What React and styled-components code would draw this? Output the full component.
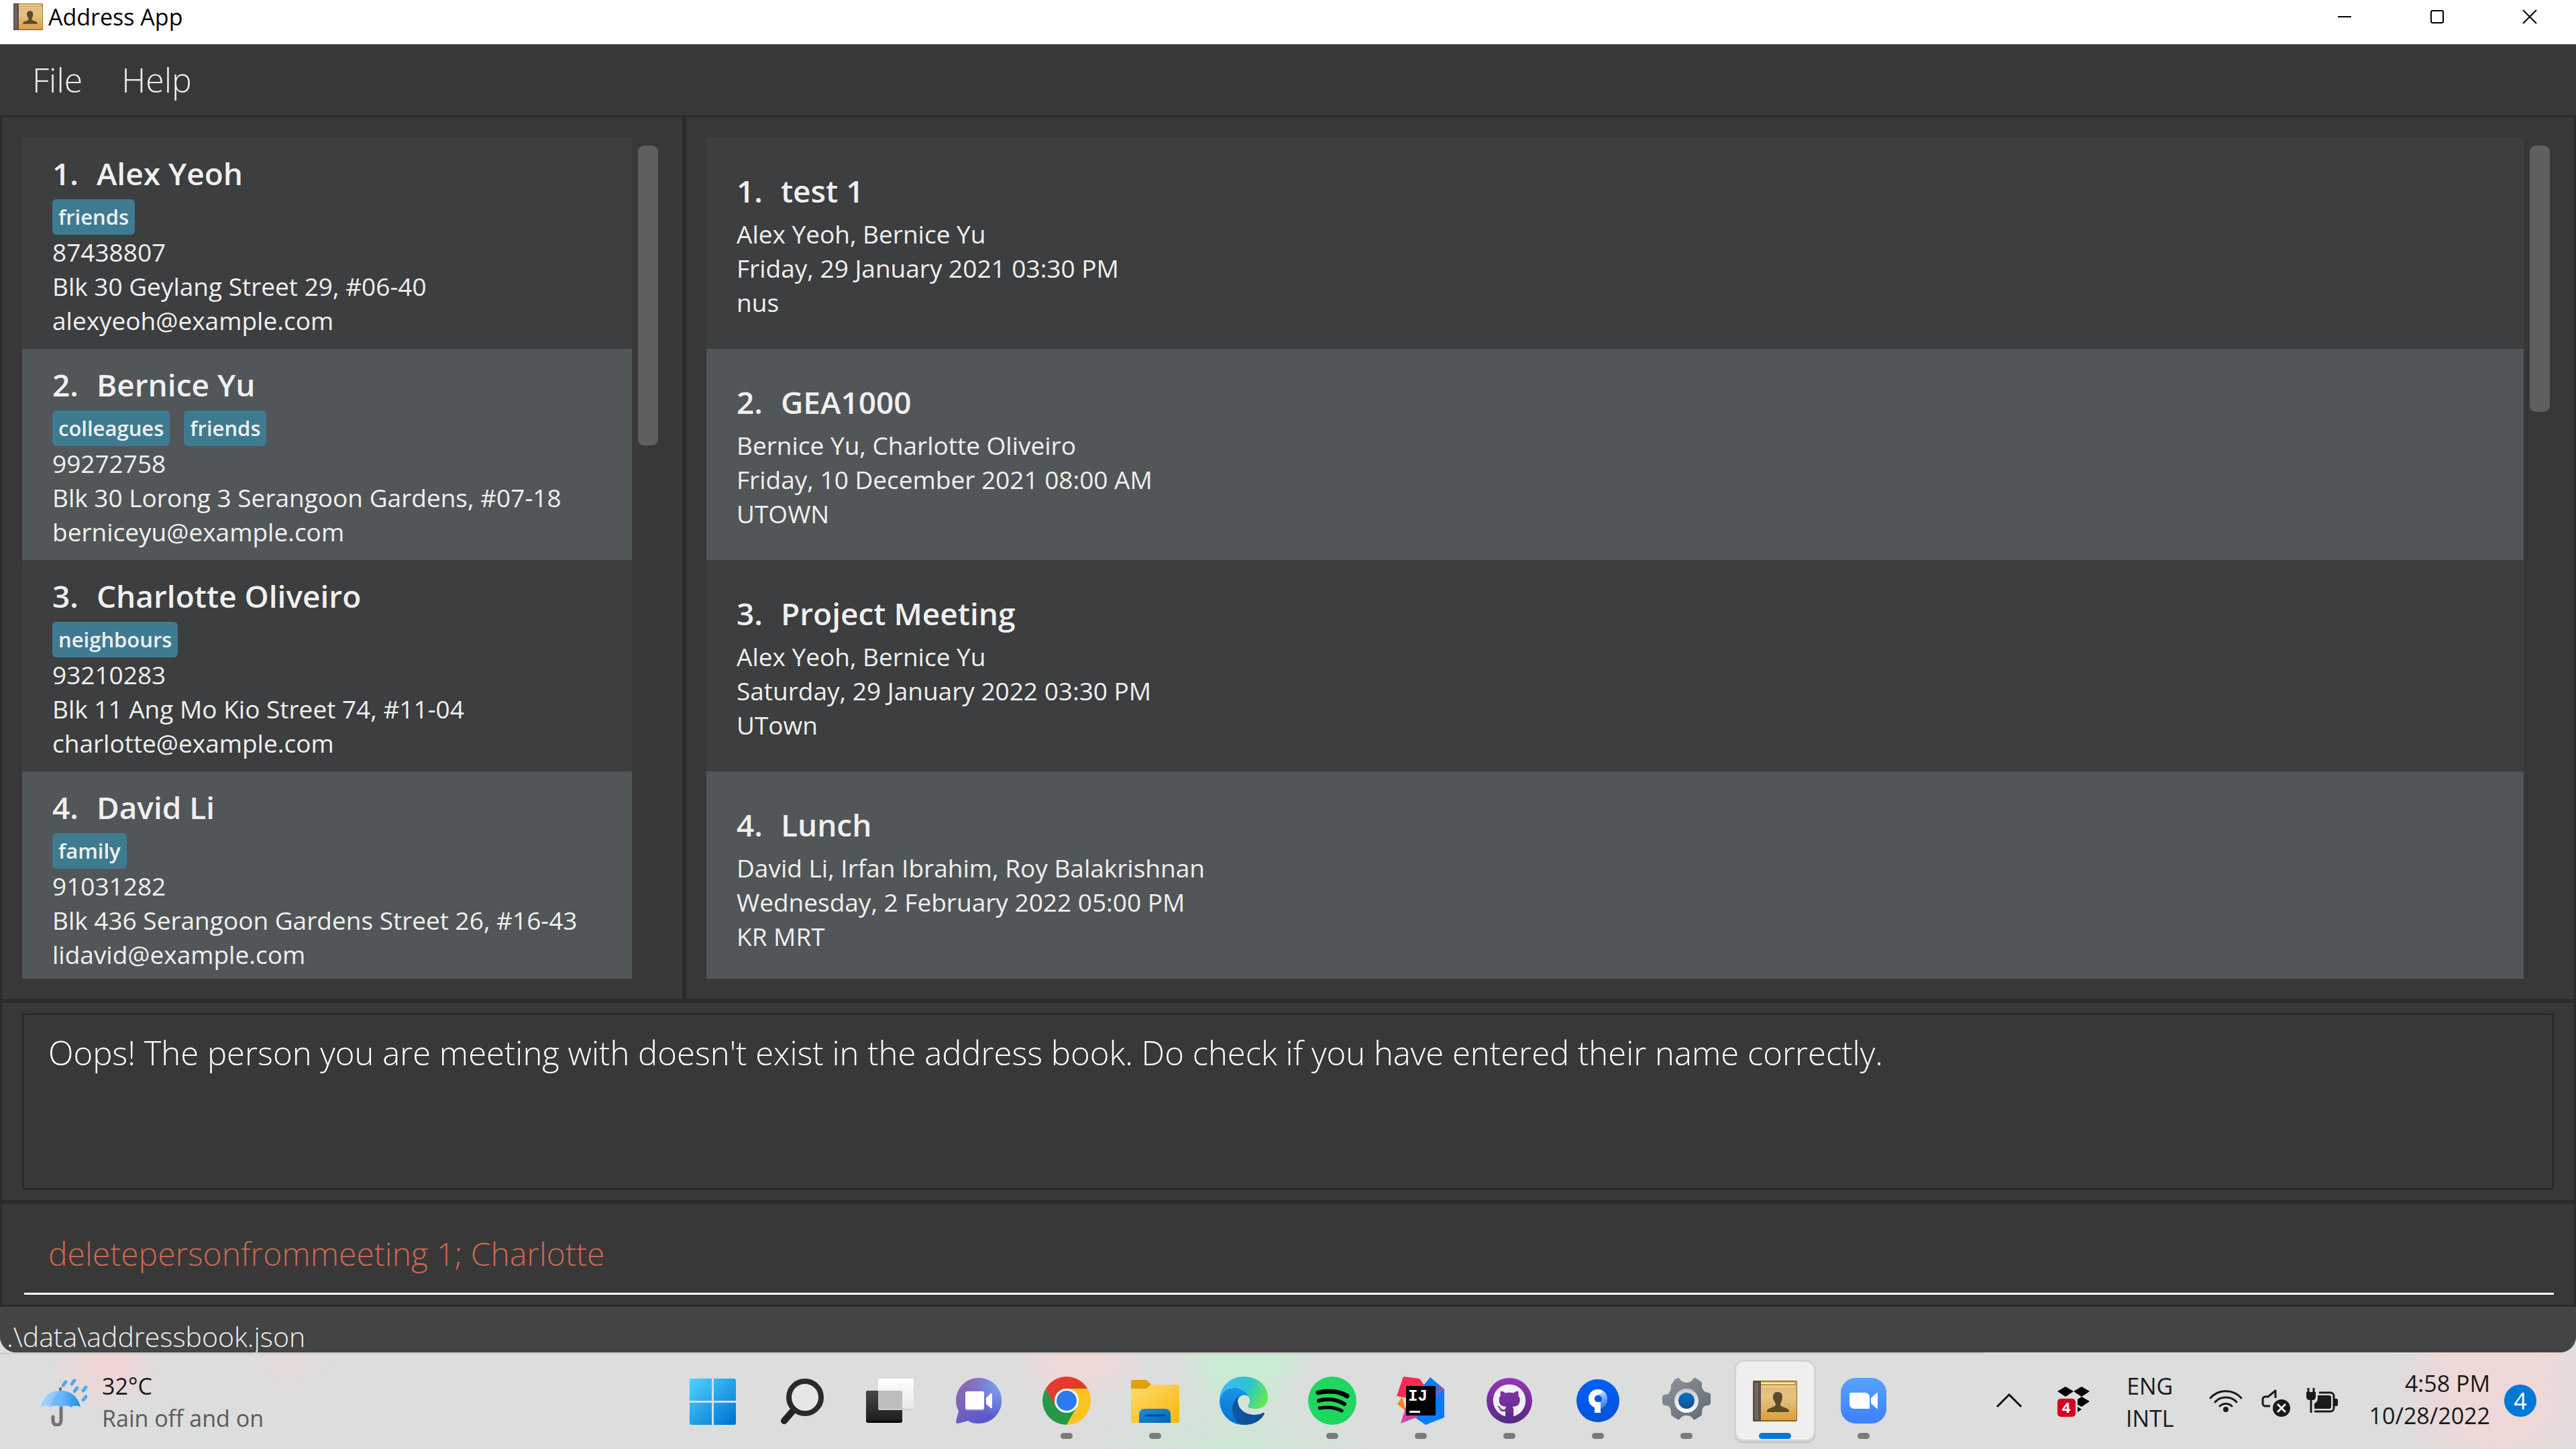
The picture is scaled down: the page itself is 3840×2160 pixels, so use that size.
import React from "react";
import styled, { createGlobalStyle, css } from "styled-components";
import { FaGithub } from "react-icons/fa";

const color = {
  base: "#383838",
  border: "#2b2b2b",
  rowEven: "#3c3e3f",
  rowOdd: "#515658",
  thumb: "#5f5f5f",
  tag: "#3e7b91",
  text: "#f0f0f0",
  error: "#d06651",
  status: "#444444",
  taskbar: "#dcdddd",
  ink: "#1a1a1a",
  accent: "#0078d7",
};

const GlobalStyle = createGlobalStyle`
  *, *::before, *::after { box-sizing: border-box; }
  html, body, #root { height: 100%; }
  body {
    margin: 0;
    overflow: hidden;
    background: ${color.taskbar};
    font-family: "Open Sans", "Noto Sans", sans-serif;
  }
  button { border: 0; padding: 0; background: none; font: inherit; color: inherit; }
  svg { display: block; }
`;

const Desktop = styled.div`
  display: flex;
  flex-direction: column;
  height: 100vh;
`;

const Window = styled.div`
  display: flex;
  flex-direction: column;
  flex: 1;
  min-height: 0;
  overflow: hidden;
  border-radius: 0 0 24px 24px;
  background: ${color.base};
`;

/* Title bar */

const TitleBar = styled.header`
  display: flex;
  align-items: center;
  height: 66px;
  padding: 0 0 16px 20px;
  background: #fff;
`;

const WindowTitle = styled.h1`
  flex: 1;
  margin: 0;
  padding-left: 8px;
  font-size: 34px;
  line-height: 48px;
  font-weight: 400;
  color: #000;
`;

const WindowButton = styled.button`
  display: grid;
  place-items: center;
  width: 138px;
  height: 48px;
`;

/* Menu */

const MenuBar = styled.nav`
  display: flex;
  align-items: center;
  height: 106px;
  padding-left: 19px;
`;

const MenuButton = styled.button`
  padding: 0 29px;
  font-size: 50px;
  line-height: 68px;
  font-weight: 300;
  color: ${color.text};
`;

/* Panels */

const Panel = styled.section`
  border: 3px solid ${color.border};
  background: ${color.base};
`;

const Panels = styled.main`
  display: grid;
  grid-template-columns: minmax(0, 17fr) minmax(0, 47fr);
  grid-template-rows: minmax(0, 1fr);
  flex: 1;
  min-height: 0;
`;

const ListPanel = styled(Panel)`
  display: flex;
  gap: 9px;
  padding: 30px 36px 30px 30px;
`;

const List = styled.ul`
  flex: 1;
  min-width: 0;
  margin: 0;
  padding: 0;
  overflow: hidden;
  list-style: none;
`;

const Track = styled.div`
  width: 30px;
  padding-top: 12px;
`;

const Thumb = styled.div`
  height: ${(p) => p.$size};
  border-radius: 9px;
  background: ${color.thumb};
`;

const Card = styled.li`
  padding: ${(p) => (p.$roomy ? "48px 45px 44px" : "22px 45px 17px")};
  color: ${color.text};
  background: ${color.rowEven};
  &:nth-child(even) { background: ${color.rowOdd}; }
`;

const CardTitle = styled.h2`
  display: flex;
  gap: 27px;
  margin: 0 0 8px;
  font-size: 46px;
  line-height: 62px;
  font-weight: 600;
`;

const Tags = styled.div`
  display: flex;
  gap: 21px;
`;

const Tag = styled.span`
  padding: 0 9px;
  border-radius: 6px;
  font-size: 31px;
  line-height: 53px;
  font-weight: 600;
  background: ${color.tag};
`;

const Detail = styled.p`
  margin: 0;
  font-size: 37px;
  line-height: 51px;
  white-space: nowrap;
`;

/* Result, command and status */

const ResultPanel = styled(Panel)`
  display: flex;
  height: 300px;
  padding: 15px 30px;
`;

const ResultText = styled.textarea`
  flex: 1;
  padding: 24px 36px;
  border: 3px solid ${color.border};
  outline: 0;
  resize: none;
  background: transparent;
  font-family: inherit;
  font-size: 49px;
  line-height: 64px;
  font-weight: 300;
  color: #fff;
`;

const CommandPanel = styled(Panel)`
  display: flex;
  height: 156px;
  padding: 15px 30px 15px 33px;
`;

const CommandInput = styled.input`
  flex: 1;
  padding: 0 36px;
  border: 0;
  border-bottom: 3px solid #fff;
  outline: 0;
  background: transparent;
  font-family: inherit;
  font-size: 48px;
  font-weight: 300;
  color: ${color.error};
`;

const StatusBar = styled.footer`
  height: 68px;
  padding: 20px 10px 0;
  background: ${color.status};
  font-size: 41px;
  line-height: 48px;
  font-weight: 300;
  color: ${color.text};
`;

/* Taskbar */

const Taskbar = styled.div`
  display: grid;
  grid-template-columns: minmax(0, 1fr) auto minmax(0, 1fr);
  align-items: center;
  height: 144px;
  background:
    linear-gradient(#cfcfcf, #cfcfcf) top left / 77% 3px no-repeat,
    radial-gradient(ellipse 90px 80px at 158px 12px, #f0d5d5 20%, transparent),
    radial-gradient(ellipse 70px 50px at 430px 10px, #e6d9d9, transparent),
    radial-gradient(ellipse 110px 90px at 1610px 0, #f0d8d8 30%, transparent),
    radial-gradient(ellipse 110px 90px at 1855px 0, #c8edd2 40%, transparent),
    radial-gradient(ellipse 200px 120px at 1840px 144px, #cfe5d6 20%, transparent),
    radial-gradient(ellipse 160px 160px at 3720px 50px, #efd8d8 40%, transparent),
    ${color.taskbar};
`;

const Weather = styled.button`
  display: flex;
  align-items: center;
  justify-self: start;
  gap: 20px;
  padding: 4px 0 0 60px;
  text-align: left;
`;

const TwoLines = styled.span`
  display: flex;
  flex-direction: column;
  font-size: 34px;
  line-height: 48px;
  color: ${color.ink};
`;

const Muted = styled.span`
  color: #5a5a5a;
`;

const Apps = styled.div`
  display: flex;
  gap: 16px;
`;

const AppButton = styled.button`
  position: relative;
  display: grid;
  place-items: center;
  width: 116px;
  height: 116px;
  border-radius: 12px;
  ${(p) =>
    p.$state === "active" &&
    css`
      background: #efefef;
      box-shadow: 0 0 0 3px #d3d3d3, 0 3px 0 3px #c9c9c9;
    `}
  ${(p) =>
    p.$state &&
    css`
      &::after {
        content: "";
        position: absolute;
        bottom: 1px;
        left: 50%;
        width: ${p.$state === "active" ? 48 : 18}px;
        height: 9px;
        border-radius: 5px;
        transform: translateX(-50%);
        background: ${p.$state === "active" ? color.accent : "#7b7b7b"};
      }
    `}
`;

const Tray = styled.div`
  display: flex;
  align-items: center;
  justify-self: end;
  padding-right: 59px;
`;

const TrayButton = styled.button`
  display: flex;
  align-items: center;
  margin-right: ${(p) => p.$after}px;
  padding-top: ${(p) => p.$drop || 0}px;
`;

const Clock = styled(TwoLines)`
  padding-bottom: 4px;
  text-align: right;
`;

const Badge = styled.button`
  width: 48px;
  height: 48px;
  border-radius: 50%;
  background: ${color.accent};
  font-size: 34px;
  line-height: 48px;
  color: #fff;
`;

/* Icons */

const AddressBook = ({ id, width = 66, height = 61 }) => (
  <svg width={width} height={height} viewBox="0 0 66 61" preserveAspectRatio="none" aria-hidden="true">
    <defs>
      <linearGradient id={id} x1="0" y1="0" x2="0" y2="1">
        <stop offset="0" stopColor="#dfb878" />
        <stop offset=".4" stopColor="#e6c285" />
        <stop offset="1" stopColor="#d9a03c" />
      </linearGradient>
    </defs>
    <rect width="66" height="61" rx="2" fill="#8a6420" />
    <rect x="12" y="1" width="53" height="58" fill={`url(#${id})`} />
    <rect x="12" y="1" width="52" height="6" fill="#c99a48" />
    <path d="M7 4H62" stroke="#fff3d8" strokeWidth="2" />
    <path d="M13 9H63" stroke="#f4ddb0" strokeWidth="1" />
    <rect width="12" height="61" rx="2" fill="#5d4f4a" />
    <rect x="3" y="3" width="5" height="55" fill="#75665f" />
    <path d="M37 17c5 0 7 3.500 7 8 0 4-2 7-3 10 0 4 4 4 8 6 4 1 5 3 5 6H21c0-3 1-5 5-6 4-2 8-2 8-6-1-3-4-6-4-10 0-4.500 2-8 7-8z" fill="#5d4a2c" />
  </svg>
);

const Icon = ({ children }) => (
  <svg width="72" height="72" viewBox="0 0 72 72" aria-hidden="true">{children}</svg>
);

const Grad = ({ id, from, to, x2 = 0, y2 = 1 }) => (
  <linearGradient id={id} x1="0" y1="0" x2={x2} y2={y2}>
    <stop offset="0" stopColor={from} />
    <stop offset="1" stopColor={to} />
  </linearGradient>
);

const Umbrella = () => (
  <Icon>
    <defs>
      <Grad id="canopy" from="#a4d2ff" to="#6bb4fb" x2={1} y2={0} />
      <Grad id="canopyDark" from="#6fb9fb" to="#1b8bea" x2={1} y2={0} />
    </defs>
    <path d="M30 16v6" stroke="#6e6e6e" strokeWidth="4" strokeLinecap="round" />
    <path d="M31 42v21c0 10-12 9-12 1v-6" fill="none" stroke="#77716f" strokeWidth="5" strokeLinecap="round" />
    <path d="M1 44C3 29 14 19 30 19s27 10 30 25q-4-4-7-2-4-2-7 2-4-4-8-2-4-2-8 2-4-4-8-2-4-2-8 2-4-4-7-2-4-2-6 2z" fill="url(#canopy)" />
    <path d="M30 19c16 0 27 10 30 25q-4-4-7-2-4-2-7 2-4-4-8-2-4-2-8 2z" fill="url(#canopyDark)" />
    <path d="M30 19c-8 5-13 14-14 25q3-4 7-2 4-2 7 2z" fill="#54a8f5" opacity=".5" />
    <path d="M38 6l-4 5M51 4l-4 5M55 15l-4 5M68 14l-4 5M68 28l-4 5" stroke="#4ea8f8" strokeWidth="5" strokeLinecap="round" />
  </Icon>
);

const WindowsLogo = () => (
  <Icon>
    <defs>
      <linearGradient id="win" gradientUnits="userSpaceOnUse" x1="2" y1="3" x2="66" y2="72">
        <stop offset="0" stopColor="#4fd4ff" />
        <stop offset="1" stopColor="#0074d3" />
      </linearGradient>
    </defs>
    <path fill="url(#win)" d="M5 3h30v33H2V6a3 3 0 013-3zM38 3h30a3 3 0 013 3v30H38zM2 39h33v33H5a3 3 0 01-3-3zM38 39h33v30a3 3 0 01-3 3H38z" />
  </Icon>
);

const Search = () => (
  <Icon>
    <path d="M24 51L11 66" stroke="#222" strokeWidth="10" strokeLinecap="round" />
    <circle cx="42" cy="31" r="24" fill="#e6e6e6" stroke="#2b2a29" strokeWidth="8" />
  </Icon>
);

const TaskView = () => (
  <Icon>
    <defs>
      <Grad id="tvd" from="#474747" to="#1e1e1e" />
      <Grad id="tvl" from="#ffffff" to="#e6e6e6" />
    </defs>
    <rect x="1" y="21" width="54" height="48" rx="3" fill="#0a0a0a" />
    <rect x="1" y="21" width="54" height="45" rx="3" fill="url(#tvd)" />
    <rect x="19" y="3" width="53" height="47" rx="3" fill="url(#tvl)" />
    <path d="M19 21h33a3 3 0 013 3v24H19z" fill="#bdbdbd" />
    <path d="M20 49h51" stroke="#cfcfcf" strokeWidth="2" />
  </Icon>
);

const Chat = () => (
  <Icon>
    <defs>
      <linearGradient id="chat" x1="0" y1=".2" x2=".6" y2="1">
        <stop offset="0" stopColor="#9169b3" />
        <stop offset="1" stopColor="#5558c8" />
      </linearGradient>
      <radialGradient id="chat2" cx=".95" cy=".2" r=".7">
        <stop offset="0" stopColor="#7ba0f5" />
        <stop offset="1" stopColor="#7ba0f5" stopOpacity="0" />
      </radialGradient>
    </defs>
    {["url(#chat)", "url(#chat2)"].map((fill) => (
      <path key={fill} fill={fill} d="M37 2c19 0 34 15 34 34S56 70 37 70c-6 0-11-1-16-4L6 70c-2 0-3-1-3-3l4-16C4 46 3 41 3 36 3 17 18 2 37 2z" />
    ))}
    <rect x="17" y="24" width="28" height="27" rx="3" fill="#8b8de0" />
    <rect x="17" y="22" width="28" height="27" rx="3" fill="#fff" />
    <path d="M48 32l7-7q2-1 2 1v20q0 2-2 1l-7-6z" fill="#fff" />
  </Icon>
);

const Chrome = () => (
  <Icon>
    <defs><clipPath id="chr"><circle cx="36" cy="36" r="36" /></clipPath></defs>
    <g clipPath="url(#chr)">
      <path d="M0 0h72v18H36L20 45 4.800 18z" fill="#e33b2e" />
      <path d="M4.800 18L20.400 45 51.600 45 36 72H0V10z" fill="#279847" />
      <path d="M67.200 18H36L51.600 45 36 72H72V18z" fill="#fcc31e" />
    </g>
    <circle cx="36" cy="36" r="18" fill="#fff" />
    <circle cx="36" cy="36" r="15" fill="#2b7bee" />
  </Icon>
);

const Explorer = () => (
  <Icon>
    <defs>
      <Grad id="fold" from="#ffdc6e" to="#f7b50c" x2={1} />
      <Grad id="foldb" from="#1590df" to="#0463b8" x2={1} />
    </defs>
    <path d="M3 5h18c3 0 4 2 6 4l4 4v7H0V8a3 3 0 013-3z" fill="#e0a106" />
    <path d="M0 18h20c4 0 6-2 9-6h40a3 3 0 013 3v51a3 3 0 01-3 3H3a3 3 0 01-3-3z" fill="url(#fold)" />
    <path d="M12 69V56a8 8 0 018-8h31a8 8 0 018 8v13z" fill="url(#foldb)" />
    <path d="M22 58h28" stroke="#0b4a8c" strokeWidth="3" strokeLinecap="round" />
  </Icon>
);

const Edge = () => (
  <Icon>
    <defs>
      <Grad id="edb" from="#1795e6" to="#0072cf" />
      <Grad id="edd" from="#0c59a4" to="#134a8a" x2={1} y2={0} />
      <linearGradient id="edt" x1="0" y1=".3" x2="1" y2=".6">
        <stop offset="0" stopColor="#3db9fb" />
        <stop offset=".55" stopColor="#2fc3cf" />
        <stop offset="1" stopColor="#66e84f" />
      </linearGradient>
    </defs>
    <path fill="url(#edb)" d="M0 36C1 24 10 17 22 17c14 0 22 11 22 14-4-6-15-4-17 5 0 12 11 21 25 21 6 0 10-1 13-3q3 0 1 3C60 67 49 72 36 72 16 72 0 56 0 36z" />
    <path fill="url(#edd)" d="M30 28c-8 6-11 14-11 20 0 12 7 23 17 24 13 0 24-5 30-15q2-3-1-3c-3 2-7 3-13 3-14 0-25-9-25-21 0-4 1-6 3-8z" />
    <path fill="url(#edt)" d="M0 36C0 15 16 0 36 0c21 0 36 14 36 31 0 11-8 17-18 17-7 0-12-2-12-4s3-3 3-8c0-9-9-19-23-19C10 17 1 24 0 36z" />
  </Icon>
);

const Spotify = () => (
  <Icon>
    <circle cx="36" cy="36" r="36" fill="#1ed760" />
    <g fill="none" stroke="#000" strokeLinecap="round">
      <path d="M15 24c14-4 32-2 43 5" strokeWidth="7" />
      <path d="M16 36c13-4 27-2 38 5" strokeWidth="6" />
      <path d="M17 47c12-2 24-1 33 4" strokeWidth="5" />
    </g>
  </Icon>
);

const IntelliJ = () => (
  <Icon>
    <defs>
      <Grad id="ijm" from="#fc3160" to="#b84dc8" />
    </defs>
    <path d="M50 1l21 18v42L43 72 27 61 40 13z" fill="#087cfa" />
    <path d="M58 32l13-13-8-7z" fill="#7a5bb5" />
    <path d="M8 30L1 41l13 11z" fill="#fb8421" />
    <path d="M14 44L6 70l26-10z" fill="url(#ijm)" />
    <path d="M10 0l24 3 8 11-27 18L0 29z" fill="#fe2857" />
    <rect x="14" y="14" width="44" height="44" fill="#000" />
    <text x="17" y="36" fill="#fff" fontFamily="Liberation Mono, monospace" fontWeight="700" fontSize="24">IJ</text>
    <rect x="19" y="51" width="16" height="3" fill="#fff" />
  </Icon>
);

const GithubDesktop = () => (
  <Icon>
    <defs>
      <Grad id="gh" from="#9436b5" to="#552a86" />
    </defs>
    <circle cx="36" cy="36" r="34" fill="url(#gh)" />
    <FaGithub x="11" y="11" size="50" color="#f2f0f6" />
  </Icon>
);

const Sourcetree = () => (
  <Icon>
    <defs>
      <Grad id="st" from="#0061fb" to="#0053d6" />
      <Grad id="stf" from="#ffffff" to="#3f83ea" x2={0.4} />
    </defs>
    <circle cx="36" cy="36" r="32" fill="url(#st)" />
    <path d="M36 19a14 14 0 0114 14c0 8-4 13-10 15V38a6 6 0 10-8 0l-1 8c-5-2-9-7-9-13a14 14 0 0114-14z" fill="url(#stf)" />
    <path d="M36 19a14 14 0 00-14 14c0 7 4 11 9 13v8h9V38h-4a5 5 0 010-10l8-6a14 14 0 00-8-3z" fill="#fff" />
    <circle cx="36" cy="33" r="5" fill="#0059e6" />
  </Icon>
);

const Settings = () => (
  <Icon>
    <defs>
      <linearGradient id="gear" gradientUnits="userSpaceOnUse" x1="10" y1="5" x2="60" y2="68">
        <stop offset="0" stopColor="#8b9196" />
        <stop offset="1" stopColor="#606c76" />
      </linearGradient>
      <Grad id="ring" from="#c3c9ce" to="#ffffff" />
      <Grad id="dot" from="#0a6fc2" to="#124f91" />
    </defs>
    <path fill="url(#gear)" d="M19 4l4-2q3 0 4 3 3 4 9 4t9-4q1-3 4-3l8 5q3 2 2 5-1 4 2 8t7 4q3 0 4 3v12q-1 4-4 4-5 0-7 3t-2 8q1 3-2 5l-8 5q-3 1-4-2-3-4-9-4t-9 4q-1 3-4 2l-8-5q-3-2-2-5 0-5-2-8t-7-3q-3 0-4-4V30q1-3 4-3 5 0 7-4t2-8q-1-3 2-5z" />
    <circle cx="36" cy="36" r="18" fill="url(#ring)" />
    <circle cx="36" cy="36" r="12" fill="url(#dot)" />
  </Icon>
);

const Zoom = () => (
  <Icon>
    <defs><Grad id="zm" from="#57a2ff" to="#3d80fc" /></defs>
    <rect x="2" y="2" width="68" height="68" rx="22" fill="url(#zm)" />
    <path d="M17 24h21a7 7 0 017 7v17H22a7 7 0 01-7-7V26a2 2 0 012-2zM47 32l9-8q1 0 1 1v22q0 1-1 1l-9-8z" fill="#fff" />
  </Icon>
);

const Chevron = () => (
  <svg width="40" height="22" viewBox="0 0 40 22" aria-hidden="true">
    <path d="M2 20L20 2l18 18" fill="none" stroke="#111" strokeWidth="3" />
  </svg>
);

const Dropbox = () => (
  <svg width="48" height="48" viewBox="0 0 48 48" aria-hidden="true">
    <path d="M12 3l12 7-12 8L0 10zM36 3l12 7-12 8-12-8zM36 18l12 7-12 8-6-3v-8zM30 33l6 4-6 4z" fill="#000" />
    <rect y="21" width="27" height="27" rx="5" fill="#d8001f" />
    <text x="13" y="42" textAnchor="middle" fill="#fff" fontFamily="Open Sans, sans-serif" fontWeight="700" fontSize="22">4</text>
  </svg>
);

const Wifi = () => (
  <svg width="50" height="36" viewBox="0 0 50 36" aria-hidden="true">
    <g fill="none" stroke={color.ink} strokeWidth="3" strokeLinecap="round">
      <path d="M2 14a31 31 0 0146 0" />
      <path d="M9 20a22 22 0 0132 0" />
      <path d="M16 26a13 13 0 0118 0" />
    </g>
    <circle cx="25" cy="31" r="4" fill={color.ink} />
  </svg>
);

const VolumeOff = () => (
  <svg width="44" height="44" viewBox="0 0 44 44" aria-hidden="true">
    <path d="M13 26H6a4 4 0 01-4-4v-6a4 4 0 014-4h4L21 3v11" fill="none" stroke={color.ink} strokeWidth="3" strokeLinejoin="round" />
    <circle cx="30" cy="29" r="13" fill={color.ink} />
    <path d="M24 23l12 12M36 23L24 35" stroke="#eee" strokeWidth="3" />
  </svg>
);

const Battery = () => (
  <svg width="50" height="40" viewBox="0 0 50 40" aria-hidden="true">
    <path d="M4 1v7M12 1v7M8 16v22" stroke={color.ink} strokeWidth="3" />
    <path d="M1 7h14v7q0 5-5 5H6q-5 0-5-5z" fill={color.ink} />
    <path d="M20 8h17a5 5 0 015 5v18a5 5 0 01-5 5H13" fill="none" stroke={color.ink} strokeWidth="3" />
    <path d="M18 12h17a3 3 0 013 3v14a3 3 0 01-3 3H13V24q5-2 5-8z" fill={color.ink} />
    <path d="M43 17h3q2 0 2 2v7q0 2-2 2h-3z" fill={color.ink} />
  </svg>
);

const Glyph = ({ children }) => (
  <svg width="22" height="22" viewBox="0 0 22 22" fill="none" stroke="#000" strokeWidth="2" aria-hidden="true">
    {children}
  </svg>
);

/* Data */

const persons = [
  { name: "Alex Yeoh", tags: ["friends"], lines: ["87438807", "Blk 30 Geylang Street 29, #06-40", "alexyeoh@example.com"] },
  { name: "Bernice Yu", tags: ["colleagues", "friends"], lines: ["99272758", "Blk 30 Lorong 3 Serangoon Gardens, #07-18", "berniceyu@example.com"] },
  { name: "Charlotte Oliveiro", tags: ["neighbours"], lines: ["93210283", "Blk 11 Ang Mo Kio Street 74, #11-04", "charlotte@example.com"] },
  { name: "David Li", tags: ["family"], lines: ["91031282", "Blk 436 Serangoon Gardens Street 26, #16-43", "lidavid@example.com"] },
];

const meetings = [
  { name: "test 1", lines: ["Alex Yeoh, Bernice Yu", "Friday, 29 January 2021 03:30 PM", "nus"] },
  { name: "GEA1000", lines: ["Bernice Yu, Charlotte Oliveiro", "Friday, 10 December 2021 08:00 AM", "UTOWN"] },
  { name: "Project Meeting", lines: ["Alex Yeoh, Bernice Yu", "Saturday, 29 January 2022 03:30 PM", "UTown"] },
  { name: "Lunch", lines: ["David Li, Irfan Ibrahim, Roy Balakrishnan", "Wednesday, 2 February 2022 05:00 PM", "KR MRT"] },
];

const apps = [
  { label: "Start", icon: <WindowsLogo /> },
  { label: "Search", icon: <Search /> },
  { label: "Task view", icon: <TaskView /> },
  { label: "Chat", icon: <Chat /> },
  { label: "Chrome", icon: <Chrome />, state: "open" },
  { label: "File Explorer", icon: <Explorer />, state: "open" },
  { label: "Edge", icon: <Edge /> },
  { label: "Spotify", icon: <Spotify />, state: "open" },
  { label: "IntelliJ IDEA", icon: <IntelliJ />, state: "open" },
  { label: "GitHub Desktop", icon: <GithubDesktop />, state: "open" },
  { label: "Sourcetree", icon: <Sourcetree />, state: "open" },
  { label: "Settings", icon: <Settings />, state: "open" },
  { label: "Address App", icon: <AddressBook id="bookTask" />, state: "active" },
  { label: "Zoom", icon: <Zoom />, state: "open" },
];

const EntryList = ({ label, items, roomy, thumb }) => (
  <ListPanel aria-label={label}>
    <List>
      {items.map((item, i) => (
        <Card key={item.name} $roomy={roomy}>
          <CardTitle>
            <span>{i + 1}.</span>
            <span>{item.name}</span>
          </CardTitle>
          {item.tags && (
            <Tags>
              {item.tags.map((tag) => <Tag key={tag}>{tag}</Tag>)}
            </Tags>
          )}
          {item.lines.map((line) => <Detail key={line}>{line}</Detail>)}
        </Card>
      ))}
    </List>
    <Track><Thumb $size={thumb} /></Track>
  </ListPanel>
);

export default function App() {
  return (
    <Desktop>
      <GlobalStyle />
      <Window>
        <TitleBar>
          <AddressBook id="bookTitle" width={44} height={40} />
          <WindowTitle>Address App</WindowTitle>
          <WindowButton aria-label="Minimize"><Glyph><path d="M1 11h20" /></Glyph></WindowButton>
          <WindowButton aria-label="Maximize"><Glyph><rect x="2" y="2" width="18" height="18" rx="2" /></Glyph></WindowButton>
          <WindowButton aria-label="Close"><Glyph><path d="M1 1l20 20M21 1L1 21" /></Glyph></WindowButton>
        </TitleBar>
        <MenuBar>
          <MenuButton>File</MenuButton>
          <MenuButton>Help</MenuButton>
        </MenuBar>
        <Panels>
          <EntryList label="Persons" items={persons} thumb="36%" />
          <EntryList label="Meetings" items={meetings} roomy thumb="32%" />
        </Panels>
        <ResultPanel>
          <ResultText
            readOnly
            aria-label="Result"
            value="Oops! The person you are meeting with doesn't exist in the address book. Do check if you have entered their name correctly."
          />
        </ResultPanel>
        <CommandPanel>
          <CommandInput aria-label="Command" defaultValue="deletepersonfrommeeting 1; Charlotte" spellCheck={false} />
        </CommandPanel>
        <StatusBar>.\data\addressbook.json</StatusBar>
      </Window>
      <Taskbar>
        <Weather>
          <Umbrella />
          <TwoLines>
            <span>32°C</span>
            <Muted>Rain off and on</Muted>
          </TwoLines>
        </Weather>
        <Apps>
          {apps.map((app) => (
            <AppButton key={app.label} aria-label={app.label} $state={app.state}>{app.icon}</AppButton>
          ))}
        </Apps>
        <Tray>
          <TrayButton $after={52} aria-label="Show hidden icons"><Chevron /></TrayButton>
          <TrayButton $after={54} aria-label="Dropbox"><Dropbox /></TrayButton>
          <TrayButton $after={52} $drop={4} aria-label="Language">
            <TwoLines>
              <span>ENG</span>
              <span>INTL</span>
            </TwoLines>
          </TrayButton>
          <TrayButton $after={28} aria-label="Network"><Wifi /></TrayButton>
          <TrayButton $after={22} $drop={8} aria-label="Volume"><VolumeOff /></TrayButton>
          <TrayButton $after={45} aria-label="Battery"><Battery /></TrayButton>
          <TrayButton $after={21} aria-label="Date and time">
            <Clock>
              <span>4:58 PM</span>
              <span>10/28/2022</span>
            </Clock>
          </TrayButton>
          <Badge aria-label="Notifications">4</Badge>
        </Tray>
      </Taskbar>
    </Desktop>
  );
}
